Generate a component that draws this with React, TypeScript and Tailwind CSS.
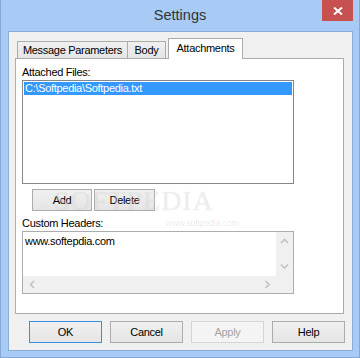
import React from "react"

function Chevron({ dir }: { dir: "up" | "down" | "left" | "right" }) {
  const d = {
    up: "M1 5 L4.5 1.5 L8 5",
    down: "M1 1.5 L4.5 5 L8 1.5",
    left: "M5 1 L1.5 4.5 L5 8",
    right: "M1.5 1 L5 4.5 L1.5 8",
  }[dir]
  const vertical = dir === "up" || dir === "down"
  return (
    <svg
      width={vertical ? 9 : 7}
      height={vertical ? 7 : 9}
      viewBox={vertical ? "0 0 9 7" : "0 0 7 9"}
      fill="none"
      stroke="#c2c2c2"
      strokeWidth="1.6"
    >
      <path d={d} />
    </svg>
  )
}

function Button({
  label,
  width,
  primary,
  disabled,
}: {
  label: string
  width: string
  primary?: boolean
  disabled?: boolean
}) {
  const border = primary
    ? "border-[#3c8ddf]"
    : disabled
      ? "border-[#d6d6d6]"
      : "border-[#acacac]"
  const bg = disabled
    ? "bg-[#f4f4f4]"
    : "bg-gradient-to-b from-[#f0f0f0] to-[#e5e5e5]"
  return (
    <div
      className={`${width} h-[22px] border ${border} ${bg} flex items-center justify-center ${
        disabled ? "text-[#a3a3a3]" : "text-black"
      }`}
    >
      {label}
    </div>
  )
}

export default function App() {
  return (
    <div className="relative w-[360px] h-[358px] bg-[#a7cbf4] border-x border-b border-[#86a8d2] font-['Liberation_Sans',Arial,sans-serif] text-[11px] tracking-[-0.3px] leading-[13px] text-black overflow-hidden">
      {/* Title bar */}
      <div className="h-[31px] flex items-center justify-center pb-[1px]">
        <span className="text-[14.5px] tracking-normal text-[#333333]">Settings</span>
      </div>
      <div className="absolute top-0 right-[6px] w-[31px] h-[21px] bg-[#c75050] flex items-center justify-center">
        <svg width="10" height="8" viewBox="0 0 10 8" stroke="white" strokeWidth="2">
          <path d="M1 0.5 L9 7.5 M9 0.5 L1 7.5" />
        </svg>
      </div>

      {/* Client area */}
      <div className="ml-[7px] w-[345px] h-[320px] border border-[#8badd6] bg-[#f0f0f0] pl-[6px] pt-[6px] flex flex-col">
        {/* Tabs */}
        <div className="h-[20px] flex items-end">
          <div className="ml-[2px] w-[111px] h-[17px] border-x border-t border-[#acacac] bg-gradient-to-b from-[#f0f0f0] to-[#e5e5e5] flex items-center justify-center pt-[1px]">
            Message Parameters
          </div>
          <div className="-ml-px w-[39px] h-[17px] border-x border-t border-[#acacac] bg-gradient-to-b from-[#f0f0f0] to-[#e5e5e5] flex items-center justify-center pt-[1px]">
            Body
          </div>
          <div className="relative z-10 ml-[2px] w-[75px] h-[21px] -mb-px border-x border-t border-[#acacac] bg-white flex items-center justify-center pb-[2px]">
            Attachments
          </div>
        </div>

        {/* Tab panel */}
        <div className="relative w-[329px] h-[256px] border border-[#acacac] bg-white pl-[6px] pt-[7px] flex flex-col">
          <div className="h-[13px]">Attached Files:</div>
          <div className="mt-px w-[272px] h-[104px] border border-[#828790] bg-white p-px">
            <div className="h-[13px] bg-[#3399ff] text-white pl-[1px]">C:\Softpedia\Softpedia.txt</div>
          </div>
          <div className="mt-[5px] flex gap-[2px] pl-[10px]">
            <Button label="Add" width="w-[60px]" />
            <Button label="Delete" width="w-[61px]" />
          </div>
          <div className="mt-[6px] h-[13px]">Custom Headers:</div>
          <div className="mt-px w-[272px] h-[63px] border border-[#abadb3] bg-[#f0f0f0] flex flex-col">
            <div className="flex flex-1">
              <div className="flex-1 bg-white rounded-br-[2px] pl-[2px] pt-[3px]">www.softepdia.com</div>
              <div className="w-[17px] flex flex-col items-center justify-between py-[6px]">
                <Chevron dir="up" />
                <Chevron dir="down" />
              </div>
            </div>
            <div className="h-[17px] flex items-center justify-between pl-[6px] pr-[22px]">
              <Chevron dir="left" />
              <Chevron dir="right" />
            </div>
          </div>

          {/* Softpedia watermark */}
          <div className="absolute left-[38px] top-[128px] text-[28px] leading-[28px] font-['Liberation_Serif',serif] tracking-[1px] text-white/40 [text-shadow:0_0_1px_rgba(0,0,0,0.12)] pointer-events-none">
            SOFTPEDIA
          </div>
          <div className="absolute left-[150px] top-[158px] text-[9px] text-black/10 pointer-events-none">
            www.softpedia.com
          </div>
        </div>

        {/* Dialog buttons */}
        <div className="mt-[7px] ml-[14px] flex gap-[8px]">
          <Button label="OK" width="w-[73px]" primary />
          <Button label="Cancel" width="w-[73px]" />
          <Button label="Apply" width="w-[73px]" disabled />
          <Button label="Help" width="w-[73px]" />
        </div>
      </div>
    </div>
  )
}
